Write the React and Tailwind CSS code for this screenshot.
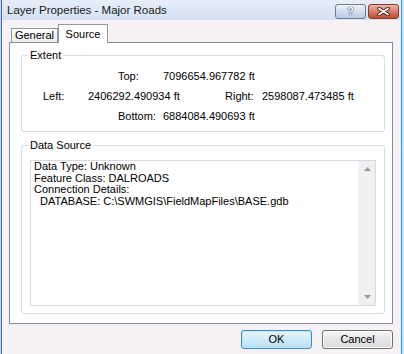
import React from 'react';

const Row = ({ children, className = '' }) => (
    <div className={`h-[20px] flex items-center ${className}`}>{children}</div>
);

const GroupBox = ({ label, className = '', children }) => (
    <fieldset className={`border border-[#d5dee6] rounded-[3px] min-w-0 ${className}`}>
        <legend className="ml-[6px] px-[2px] leading-[13px]">{label}</legend>
        {children}
    </fieldset>
);

const Arrow = ({ up }) => (
    <svg width="7" height="4" viewBox="0 0 7 4">
        <path d={up ? 'M0 4 L3.5 0 L7 4 Z' : 'M0 0 L3.5 4 L7 0 Z'} fill="#9a9aa0" />
    </svg>
);

export default function App() {
    return (
        <div className="w-[404px] h-[354px] overflow-hidden flex bg-[#f5f1f4] font-['Liberation_Sans',Arial,sans-serif] text-[11px] text-black">
            {/* left window frame */}
            <div className="w-[2px] flex shrink-0">
                <div className="w-px bg-[#c3d4e8]" />
                <div className="w-px bg-[#3d6fae]" />
            </div>

            <div className="flex-1 flex flex-col min-w-0">
                {/* title bar */}
                <div className="h-[20px] shrink-0 flex items-start pl-[5px] pr-px bg-linear-to-b from-[#e6eef9] to-[#d4e2f2]">
                    <span className="text-[11.5px] leading-[20px] text-[#1a1a1a]">Layer Properties - Major Roads</span>
                    <div className="ml-auto mt-[4px] flex gap-[2px]">
                        <div className="w-[31px] h-[15px] rounded-[3px] border border-[#6c7c91] bg-linear-to-b from-[#f0f4fa] via-[#d2deed] to-[#b7cbe2] flex items-center justify-center">
                            <span className="text-[11px] font-bold leading-none text-white [text-shadow:0_0_1px_#1e2a3a,0_0_1px_#1e2a3a]">?</span>
                        </div>
                        <div className="w-[31px] h-[15px] rounded-[3px] border border-[#8a3a2b] bg-linear-to-b from-[#ebb4a5] via-[#d7806a] to-[#c14a33] flex items-center justify-center">
                            <svg width="13" height="9" viewBox="0 0 13 9">
                                <path d="M2 1.5 L11 7.5 M11 1.5 L2 7.5" stroke="#4a1d14" strokeWidth="3.6" strokeLinecap="round" />
                                <path d="M2 1.5 L11 7.5 M11 1.5 L2 7.5" stroke="#ffffff" strokeWidth="1.8" strokeLinecap="round" />
                            </svg>
                        </div>
                    </div>
                </div>

                {/* dialog body */}
                <div className="flex-1 flex flex-col px-[7px] pt-[4px]">
                    <div className="flex items-end h-[18px] pl-[2px]">
                        <div className="w-[47px] h-[14px] border border-b-0 border-[#919b9c] bg-linear-to-b from-white to-[#ebebeb] flex items-center justify-center">
                            General
                        </div>
                        <div className="w-[50px] h-[19px] -mb-px relative z-10 border border-b-0 border-[#919b9c] bg-white flex items-center justify-center">
                            Source
                        </div>
                    </div>

                    <div className="h-[282px] border border-[#898c95] bg-white flex flex-col">
                        <GroupBox label="Extent" className="mt-[6px] ml-[11px] mr-[7px] pb-[5px]">
                            <div className="pt-[4px]">
                                <Row className="pl-[96px]">
                                    <span className="w-[45px]">Top:</span>
                                    <span>7096654.967782 ft</span>
                                </Row>
                                <Row className="pl-[21px]">
                                    <span className="w-[45px]">Left:</span>
                                    <span className="w-[137px]">2406292.490934 ft</span>
                                    <span className="w-[37px]">Right:</span>
                                    <span>2598087.473485 ft</span>
                                </Row>
                                <Row className="pl-[96px]">
                                    <span className="w-[45px]">Bottom:</span>
                                    <span>6884084.490693 ft</span>
                                </Row>
                            </div>
                        </GroupBox>

                        <GroupBox label="Data Source" className="mt-[7px] ml-[11px] mr-[7px] pb-[7px]">
                            <div className="mt-[8px] mx-[8px] h-[146px] border border-[#d9d8e0] flex">
                                <div className="flex-1 pl-[3px] leading-[11.5px] whitespace-pre">
                                    <div>Data Type: Unknown</div>
                                    <div>Feature Class: DALROADS</div>
                                    <div>Connection Details:</div>
                                    <div>{'  DATABASE: C:\\SWMGIS\\FieldMapFiles\\BASE.gdb'}</div>
                                </div>
                                <div className="w-[17px] bg-[#f1eff2] border-l border-[#f8f7f9] flex flex-col items-center justify-between py-[6px]">
                                    <Arrow up />
                                    <Arrow />
                                </div>
                            </div>
                        </GroupBox>
                    </div>

                    <div className="mt-[6px] flex justify-end gap-[10px]">
                        <div className="w-[71px] h-[19px] rounded-[3px] border border-[#3a8ad0] bg-linear-to-b from-[#e8f5fd] to-[#b9e0f7] shadow-[inset_0_0_0_1px_#bfe6fb] flex items-center justify-center">
                            OK
                        </div>
                        <div className="w-[71px] h-[19px] rounded-[3px] border border-[#707070] bg-linear-to-b from-[#f4f4f4] to-[#d9d9d9] shadow-[inset_0_0_0_1px_#fbfbfb] flex items-center justify-center">
                            Cancel
                        </div>
                    </div>
                </div>
            </div>

            {/* right window frame */}
            <div className="w-[4px] flex shrink-0">
                <div className="w-px bg-[#dfe6f0]" />
                <div className="w-px bg-[#2fb2e8]" />
                <div className="w-px bg-[#bcd4ee]" />
                <div className="w-px bg-[#d8e5f4]" />
            </div>
        </div>
    );
}
